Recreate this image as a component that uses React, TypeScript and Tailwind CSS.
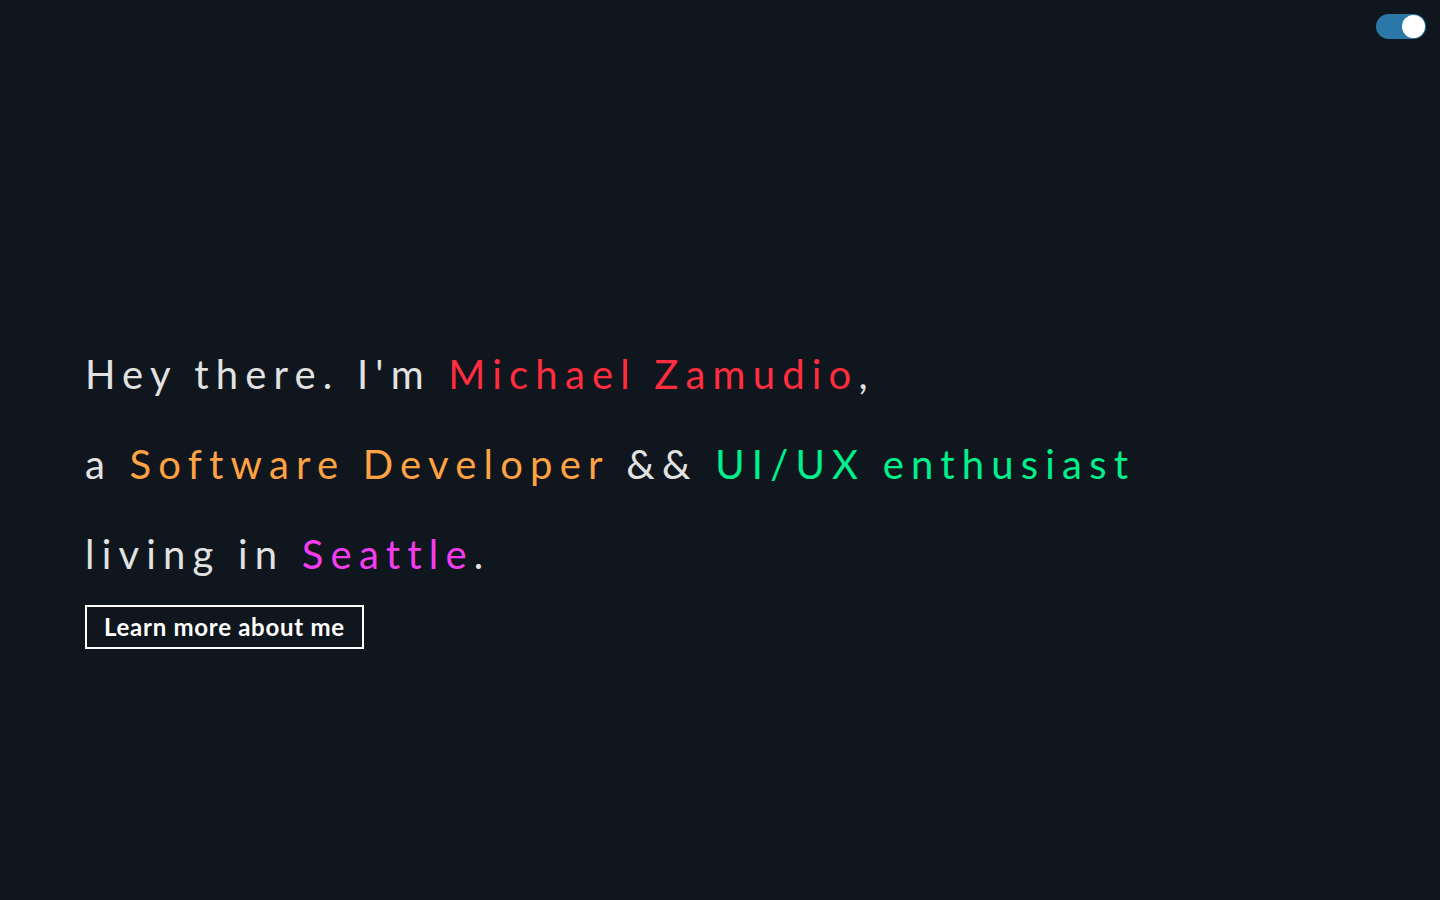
import React, { useState } from 'react';

export default function App() {
  const [dark, setDark] = useState(true);

  return (
    <div className="min-h-screen w-full bg-[#0f161e] font-['Lato','Noto_Sans',sans-serif] text-[#e2e2e2]">
      <div className="flex justify-end px-[14px] pt-[14px]">
        <button
          onClick={() => setDark(!dark)}
          className="flex h-[25px] w-[50px] items-center justify-end rounded-full bg-[#2b78a8] px-[1px]"
        >
          <span className="block h-[23px] w-[23px] rounded-full bg-white" />
        </button>
      </div>

      <main className="px-[85px] pt-[290px]">
        <h1 className="text-[40px] font-normal leading-[90px] tracking-[0.18em]">
          <div>
            Hey there. I'm <span className="text-[#ff2d3e]">Michael Zamudio</span>,
          </div>
          <div>
            a <span className="text-[#ffa242]">Software Developer</span> &amp;&amp;{' '}
            <span className="text-[#00f08b]">UI/UX enthusiast</span>
          </div>
          <div>
            living in <span className="text-[#f63cf0]">Seattle</span>.
          </div>
        </h1>
        <button className="mt-[6px] border-2 border-white px-[17px] py-[5px] text-[24px] font-bold leading-[30px] tracking-[0.03em] text-white">
          Learn more about me
        </button>
      </main>
    </div>
  );
}
